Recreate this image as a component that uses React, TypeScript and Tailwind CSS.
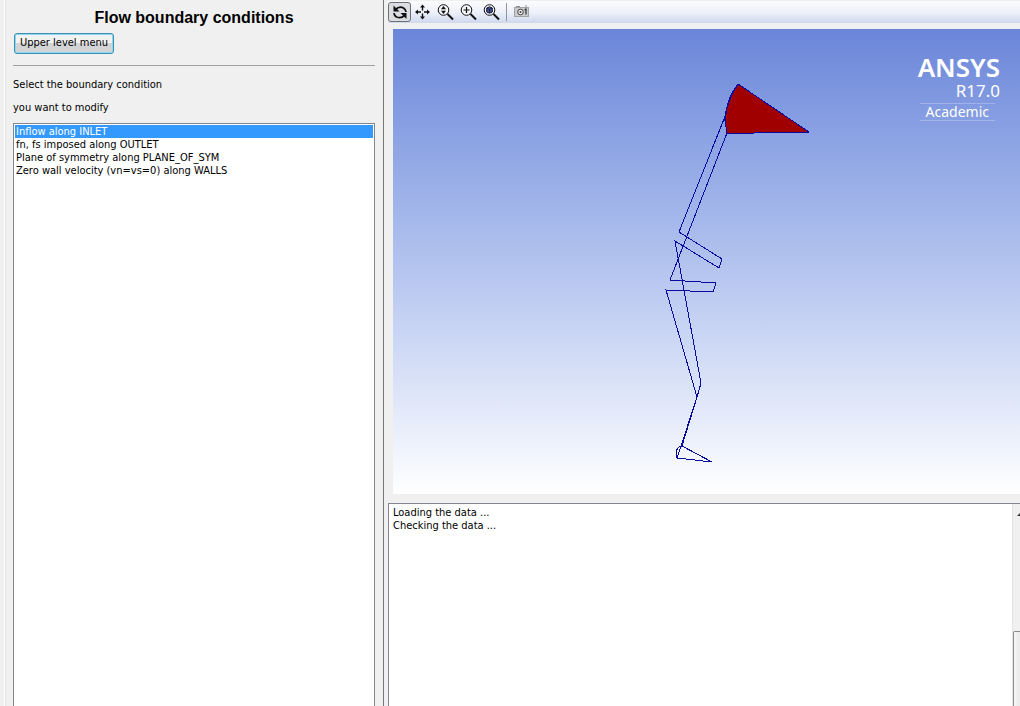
import React, { useState } from 'react';

const BOUNDARY_CONDITIONS = [
  'Inflow along INLET',
  'fn, fs imposed along OUTLET',
  'Plane of symmetry along PLANE_OF_SYM',
  'Zero wall velocity (vn=vs=0) along WALLS'
];

const LOG_LINES = ['Loading the data ...', 'Checking the data ...'];

interface ToolButtonProps {
  label: string;
  active?: boolean;
  children: React.ReactNode;
}

function ToolButton({ label, active, children }: ToolButtonProps) {
  return (
    <button
      type="button"
      aria-label={label}
      aria-pressed={active}
      className={
        active
          ? 'flex h-5 w-[23px] items-center justify-center rounded-[3px] border border-[#6d7076] bg-[#dcdee2]'
          : 'flex h-5 w-[23px] items-center justify-center'
      }
    >
      <svg width="18" height="18" viewBox="0 0 18 18" fill="none" stroke="#111" aria-hidden="true">
        {children}
      </svg>
    </button>
  );
}

function Lens({ children }: { children: React.ReactNode }) {
  return (
    <>
      <circle cx="6.5" cy="7" r="5.3" fill="#f4f6fa" strokeWidth="1" />
      <path d="M10.5 11l5.5 5.500" strokeWidth="2" />
      {children}
    </>
  );
}

function Toolbar() {
  return (
    <div
      role="toolbar"
      aria-label="View tools"
      className="flex h-[22px] items-center bg-linear-to-b from-[#fbfcfe] via-[#eef1fa] to-[#ced8ee]"
    >
      <ToolButton label="Rotate" active>
        <path d="M4.500 6.500C7 4 10 3.500 12.500 5c1.500 1 2.500 2.500 2.500 4" strokeWidth="1.800" />
        <path d="M2.500 2.500v6h6z" fill="#111" stroke="none" />
        <path d="M13.500 12.500c-2.500 2.500-5.500 2.500-8 1.500-1.500-1-2.500-2.500-2.500-4" strokeWidth="1.800" />
        <path d="M15.500 16v-6h-6z" fill="#111" stroke="none" />
      </ToolButton>
      <ToolButton label="Pan">
        <path d="M8.500 4v3.500M8.500 10.500v3.500M3.500 9h3.500M10 9h3.500" strokeWidth="1.400" />
        <path
          d="M8.500 1.500l2.500 3H6zM8.500 16.500l2.500-3H6zM1 9l3-2.500v5zM16 9l-3-2.500v5z"
          fill="#111"
          stroke="none"
        />
      </ToolButton>
      <ToolButton label="Zoom">
        <Lens>
          <path d="M6.500 3l2.500 3.200H4zM6.500 11l2.500-3.200H4z" fill="#111" stroke="none" />
        </Lens>
      </ToolButton>
      <ToolButton label="Zoom in">
        <Lens>
          <path d="M6.500 4v6M3.500 7h6" strokeWidth="1.200" />
        </Lens>
      </ToolButton>
      <ToolButton label="Zoom to fit">
        <Lens>
          <path d="M6.500 3.800l2.800 1.200v4L6.500 10.200 3.700 9V5z" fill="#4a5590" stroke="#151a3c" />
          <path d="M4 5.200l2.500 1.100L9 5.200M6.500 6.300V10" stroke="#151a3c" strokeWidth=".8" />
        </Lens>
      </ToolButton>
      <span className="mx-[3px] h-[18px] w-px bg-[#8f949c]" />
      <ToolButton label="Snapshot">
        <rect x="1.500" y="4.500" width="14" height="9" fill="#c9cbcd" stroke="#a0a2a4" />
        <path d="M3 3.500h4M12 3h2" stroke="#8e9092" />
        <circle cx="7.500" cy="9" r="2.800" fill="#eee" stroke="#444" />
        <circle cx="7.500" cy="9" r="1" fill="#444" stroke="none" />
        <path d="M11.500 7l1.500-1v5.500" stroke="#333" strokeWidth="1.200" />
      </ToolButton>
    </div>
  );
}

function ConditionPanel() {
  const [selected, setSelected] = useState(BOUNDARY_CONDITIONS[0]);

  return (
    <section className="flex w-[377px] shrink-0 flex-col pr-2 pl-[7px]">
      <h1 className="pt-[6px] text-center font-['Liberation_Sans',Arial,sans-serif] text-[16px] leading-6 font-bold">
        Flow boundary conditions
      </h1>
      <button
        type="button"
        className="mt-[3px] ml-px h-[21px] w-[100px] self-start rounded-[3px] border border-[#3c8fb5] bg-linear-to-b from-[#f2f2f2] from-50% to-[#d2d4d6] to-50% shadow-[inset_0_0_0_1px_#8fd6f0]"
      >
        Upper level menu
      </button>
      <hr className="mt-[11px] border-[#a0a0a0]" />
      <label htmlFor="conditions" className="mt-[7px] block leading-[23px]">
        Select the boundary condition
        <br />
        you want to modify
      </label>
      <select
        id="conditions"
        size={40}
        value={selected}
        onChange={(e) => setSelected(e.target.value)}
        className="mt-[4px] min-h-0 flex-1 appearance-none overflow-hidden border border-b-0 border-[#828790] bg-white px-px pt-px outline-none"
      >
        {BOUNDARY_CONDITIONS.map(condition => (
          <option
            key={condition}
            value={condition}
            className="h-[13px] min-h-0 px-px py-0 leading-[14px] text-black checked:bg-[#3399ff] checked:bg-linear-to-b checked:from-[#3399ff] checked:to-[#3399ff] checked:text-white"
          >
            {condition}
          </option>
        ))}
      </select>
    </section>
  );
}

function ProductMark() {
  return (
    <div className="absolute top-[18px] right-5 flex flex-col items-end font-['Noto_Sans','Open_Sans',sans-serif] text-white">
      <span className="text-[26px] leading-8 font-semibold mt-1">ANSYS</span>
      <span className="text-[17px] leading-4">R17.0</span>
      <span className="mt-1 mr-[5px] border-y border-white/25 px-[6px] text-[14px] leading-4">
        Academic
      </span>
    </div>
  );
}

function Viewport() {
  return (
    <div className="relative ml-[5px] min-h-0 flex-[465] bg-linear-to-b from-[#6b86d9] to-white">
      <svg
        viewBox="393 29 627 465"
        className="absolute inset-0 h-full w-full"
        fill="none"
        stroke="#0a0aa0"
        strokeWidth="1"
        shapeRendering="crispEdges"
        role="img"
        aria-label="Flow domain geometry"
      >
        <path d="M738 84L809 132L727 133.500C724 118 725 100 738 84z" fill="#a00000" />
        <path d="M738 84C731 95 726 107 724 121" />
        <path d="M724 119L679 232L722 259L719 268L675 241L701 383L697 397L682 446" />
        <path d="M727 133L670 280L716 283L713 292L666 290L697 397L681 446L677 458" />
        <path d="M682 446L712 462L677 458C675 453 676 447 682 446z" />
      </svg>
      <ProductMark />
    </div>
  );
}

function MessageLog() {
  return (
    <div className="mt-[9px] flex min-h-0 flex-[202] border-t border-l border-[#828790] bg-white">
      <textarea
        readOnly
        aria-label="Messages"
        value={LOG_LINES.join('\n')}
        className="min-w-0 flex-1 resize-none overflow-hidden bg-white px-1 py-[2px] leading-[13px] outline-none"
      />
      <div className="flex w-2 flex-col overflow-hidden border-l border-[#e3e3e3] bg-[#f0f0f0]">
        <svg width="17" height="17" viewBox="0 0 17 17" className="shrink-0" aria-hidden="true">
          <path d="M4 12L8 8l4 4z" fill="#333" />
        </svg>
        <span className="mt-[110px] w-[17px] flex-1 rounded-tl-[2px] border border-b-0 border-[#8c8c8c] bg-linear-to-r from-[#f6f6f6] to-[#d8d8d8]" />
      </div>
    </div>
  );
}

export default function App() {
  return (
    <main className="flex h-screen overflow-hidden bg-[#f0f0f0] font-['DejaVu_Sans_Condensed','DejaVu_Sans',sans-serif] text-[11px] text-black">
      <div className="w-[6px] shrink-0 border-r border-[#e3e3e3] bg-linear-to-r from-[#f0f0f0] from-80% to-white to-80%" />
      <ConditionPanel />
      <div className="mr-1 w-px shrink-0 bg-[#777]" />
      <section className="flex min-w-0 flex-1 flex-col">
        <div className="h-px shrink-0" />
        <Toolbar />
        <div className="h-[6px] shrink-0" />
        <Viewport />
        <MessageLog />
      </section>
    </main>
  );
}
